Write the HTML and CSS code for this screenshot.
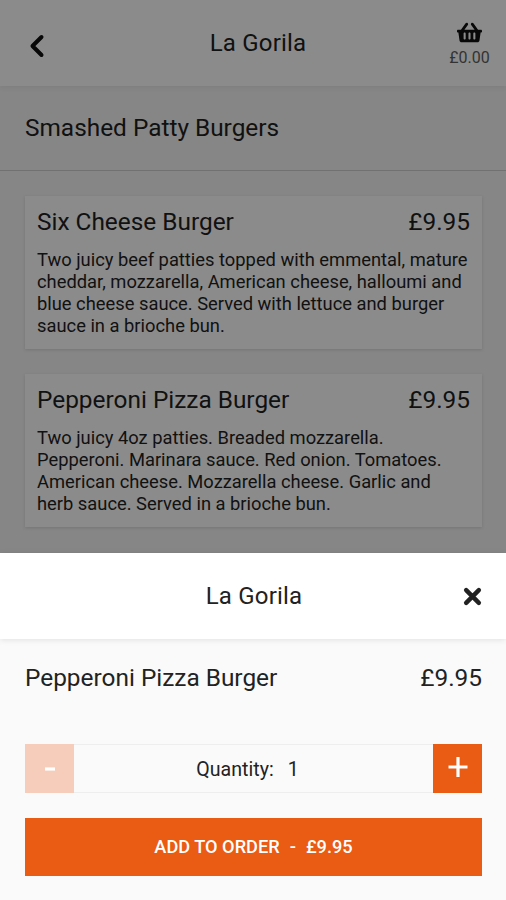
FILE: index.html
```html
<!DOCTYPE html>
<html lang="en">
<head>
<meta charset="utf-8">
<title>La Gorila</title>
<link rel="stylesheet" href="styles.css">
</head>
<body>
<div class="app">
  <main class="menu">
    <header class="topbar">
      <svg class="back" viewBox="0 0 16 24"><path d="M12.500 3 3.500 12 12.500 21"/></svg>
      <h1 class="title menu-title"><span>La Gorila</span></h1>
      <div class="basket">
        <svg class="basket-icon" viewBox="0 0 576 512"><path d="M576 216v16c0 13.300-10.700 24-24 24h-8l-26.100 182.800C514.500 462.400 494.300 480 470.400 480H105.600c-23.900 0-44.100-17.600-47.500-41.200L32 256h-8c-13.300 0-24-10.700-24-24v-16c0-13.300 10.700-24 24-24h67.300l107-147.100c10.400-14.300 30.400-17.500 44.700-7.100 14.300 10.400 17.500 30.400 7.100 44.700L170.500 192h235.100L325.900 82.500c-10.400-14.300-7.200-34.300 7.100-44.700 14.300-10.400 34.300-7.200 44.700 7.100l107 147.100H552c13.300 0 24 10.700 24 24zM312 392V280c0-13.300-10.700-24-24-24s-24 10.700-24 24v112c0 13.300 10.700 24 24 24s24-10.700 24-24zm112 0V280c0-13.300-10.700-24-24-24s-24 10.700-24 24v112c0 13.300 10.700 24 24 24s24-10.700 24-24zm-224 0V280c0-13.300-10.700-24-24-24s-24 10.700-24 24v112c0 13.300 10.700 24 24 24s24-10.700 24-24z"/></svg>
        <span class="total">£0.00</span>
      </div>
    </header>
    <h2 class="section"><span>Smashed Patty Burgers</span></h2>
    <div class="items">
      <article class="card">
        <div class="row"><h3>Six Cheese Burger</h3><span class="price">£9.95</span></div>
        <p>Two juicy beef patties topped with emmental, mature<br>cheddar, mozzarella, American cheese, halloumi and<br>blue cheese sauce. Served with lettuce and burger<br>sauce in a brioche bun.</p>
      </article>
      <article class="card">
        <div class="row"><h3>Pepperoni Pizza Burger</h3><span class="price">£9.95</span></div>
        <p>Two juicy 4oz patties. Breaded mozzarella.<br>Pepperoni. Marinara sauce. Red onion. Tomatoes.<br>American cheese. Mozzarella cheese. Garlic and<br>herb sauce. Served in a brioche bun.</p>
      </article>
    </div>
  </main>
  <section class="sheet">
    <header class="sheet-head">
      <h2 class="title"><span>La Gorila</span></h2>
      <svg class="close" viewBox="0 0 18 18"><path d="M3 3 15 15M15 3 3 15"/></svg>
    </header>
    <div class="sheet-body">
      <div class="row selected"><span>Pepperoni Pizza Burger</span><span class="price">£9.95</span></div>
      <div class="stepper">
        <button class="step minus" aria-label="Decrease"><svg viewBox="0 0 20 20"><path d="M5 10H15"/></svg></button>
        <div class="qty"><span>Quantity:</span><span>1</span></div>
        <button class="step" aria-label="Increase"><svg viewBox="0 0 20 20"><path d="M.5 10H19.500M10 0V20"/></svg></button>
      </div>
      <button class="add"><span>ADD TO ORDER</span><span>-</span><span>£9.95</span></button>
    </div>
  </section>
</div>
</body>
</html>
```
FILE: styles.css
```css
* { box-sizing: border-box; }
body { margin: 0; font-family: Roboto, "Liberation Sans", sans-serif; color: #222; }
h1, h2, h3, p { margin: 0; font-weight: 400; }
.app { height: 900px; display: flex; flex-direction: column; overflow: hidden; }
.menu { height: 553px; background: #868686; color: #111; }
.topbar { height: 86px; background: #8b8b8b; display: grid; grid-template-columns: 70px 1fr 70px; align-items: center; box-shadow: 0 1px 6px rgba(0,0,0,.07); }
.back { width: 16px; height: 24px; margin: 5px 0 0 29px; fill: none; stroke: #080808; stroke-width: 4; stroke-linecap: round; stroke-linejoin: round; }
.title { font-size: 24px; line-height: 30px; text-align: center; letter-spacing: .2px; padding-left: 2px; }
.menu-title { padding: 0 0 0 10px; }
.basket { display: flex; flex-direction: column; align-items: center; padding: 2px 3px 0 0; }
.basket-icon { width: 25px; height: 23px; fill: #080808; }
.total { font-size: 16px; line-height: 20px; margin-top: 4px; color: #333; }
.section { height: 85px; padding: 27px 25px; font-size: 24.4px; line-height: 30px; border-bottom: 1px solid #717171; }
.items { padding: 25px 24px 0 25px; display: grid; gap: 25px; }
.card { height: 153px; padding: 11px 12px; background: #8b8b8b; box-shadow: 0 1px 3px rgba(0,0,0,.13); }
.row { display: flex; justify-content: space-between; font-size: 24.4px; line-height: 30px; }
h3 { font-size: inherit; }
.card p { margin-top: 12px; font-size: 18.340px; line-height: 22px; white-space: nowrap; }
.sheet { height: 347px; background: #fafafa; }
.sheet-head { height: 86px; background: #fff; display: grid; grid-template-columns: 1fr; align-items: center; box-shadow: 0 1px 6px rgba(0,0,0,.1); }
.sheet-head > * { grid-area: 1 / 1; }
.close { width: 19px; height: 19px; justify-self: end; margin-right: 24px; fill: none; stroke: #222; stroke-width: 4.2; stroke-linecap: round; }
.sheet-body { padding: 24px 24px 0 25px; }
.stepper { height: 49px; margin-top: 51px; display: flex; }
.step { width: 49px; padding: 0 0 3px; border: 0; background: #ea5b13; display: grid; place-items: center; }
.step svg { width: 20px; height: 20px; fill: none; stroke: #fff; stroke-width: 3.2; }
.minus { background: #f5cdba; padding-bottom: 0; }
.qty { flex: 1; border: 1px solid #eee; border-width: 1px 0; display: flex; align-items: center; justify-content: center; gap: 14px; padding: 2px 12px 0 0; font-size: 19.600px; }
.add { width: 100%; height: 58px; margin-top: 25px; padding: 0 0 2px; border: 0; background: #ea5b13; color: #fff; font: 500 18.200px Roboto, sans-serif; display: flex; align-items: center; justify-content: center; gap: 10px; }
```
